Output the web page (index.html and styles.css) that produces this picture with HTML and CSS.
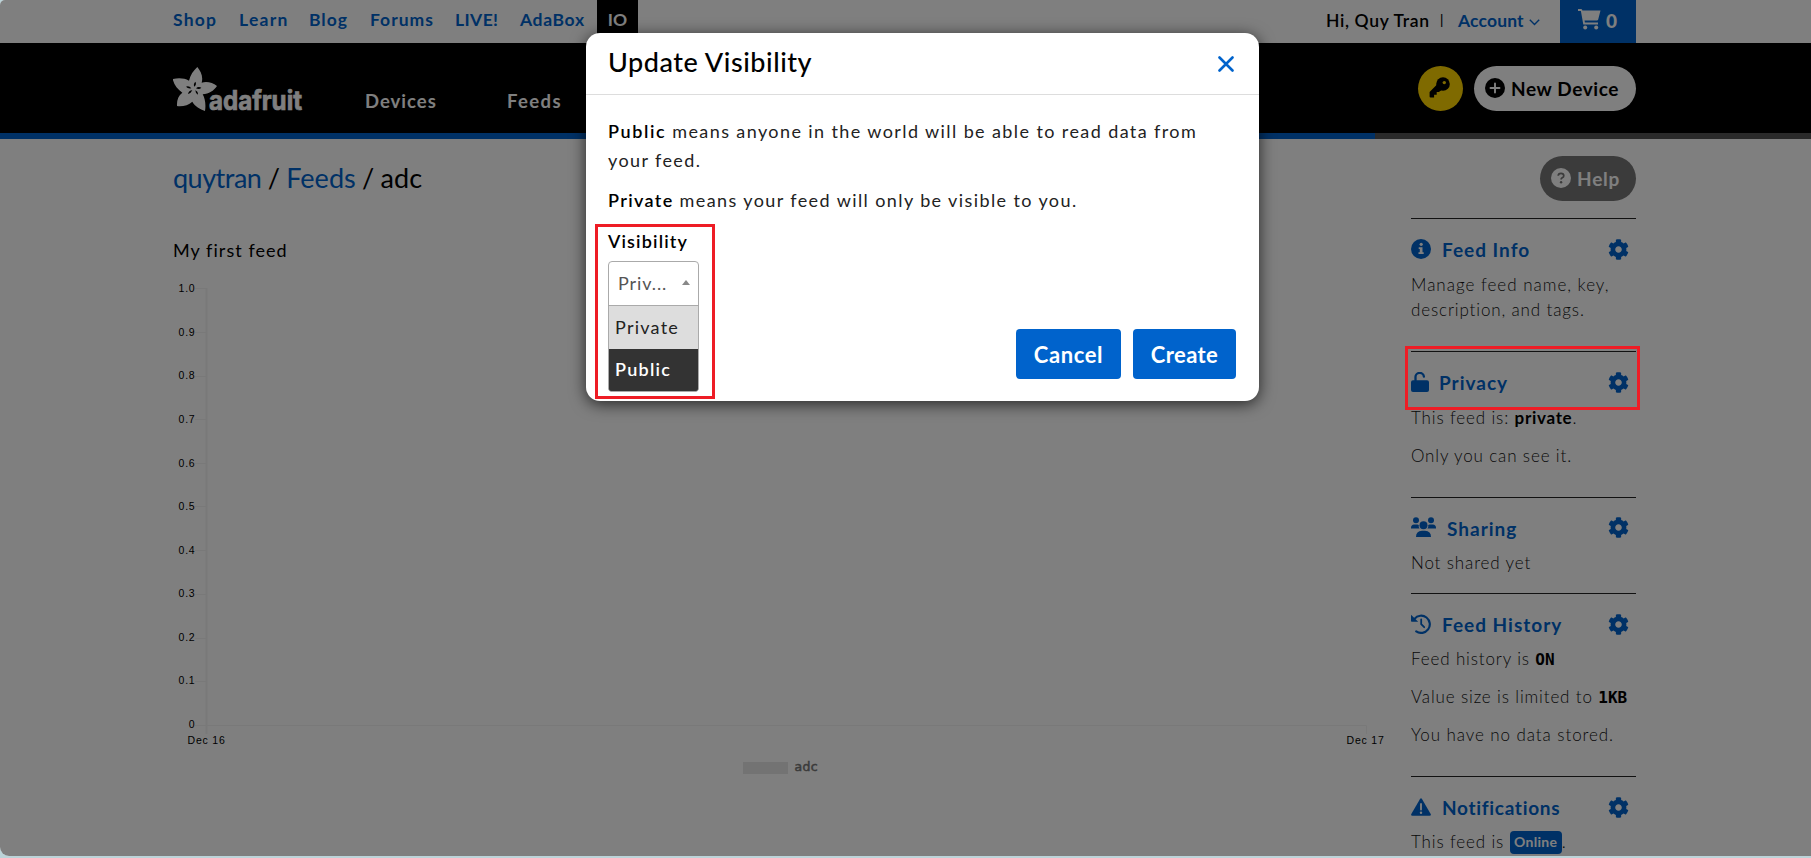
FILE: index.html
```html
<!DOCTYPE html>
<html lang="en">
<head>
<meta charset="utf-8">
<title>adc - Adafruit IO</title>
<link rel="stylesheet" href="styles.css">
</head>
<body>
<svg width="0" height="0" class="defs">
  <symbol id="cog" viewBox="0 0 512 512"><path d="M487.4 315.7l-42.6-24.6c4.3-23.2 4.3-47 0-70.2l42.6-24.6c4.9-2.8 7.1-8.6 5.5-14-11.1-35.6-30-67.8-54.7-94.6-3.8-4.1-10-5.1-14.8-2.3L380.8 110c-17.9-15.4-38.5-27.3-60.8-35.1V25.8c0-5.6-3.9-10.5-9.4-11.7-36.7-8.2-74.3-7.8-109.2 0-5.5 1.2-9.4 6.1-9.4 11.7V75c-22.2 7.9-42.8 19.8-60.8 35.1L88.7 85.5c-4.9-2.8-11-1.9-14.8 2.3-24.7 26.7-43.6 58.9-54.7 94.6-1.7 5.4.6 11.2 5.5 14L67.3 221c-4.3 23.2-4.3 47 0 70.2l-42.6 24.6c-4.9 2.8-7.1 8.6-5.5 14 11.1 35.6 30 67.8 54.7 94.6 3.8 4.1 10 5.1 14.8 2.3l42.6-24.6c17.9 15.4 38.5 27.3 60.8 35.1v49.2c0 5.6 3.9 10.5 9.4 11.7 36.7 8.2 74.3 7.8 109.2 0 5.5-1.2 9.4-6.1 9.4-11.7v-49.2c22.2-7.9 42.8-19.8 60.8-35.1l42.6 24.6c4.9 2.8 11 1.9 14.8-2.3 24.7-26.7 43.6-58.9 54.7-94.6 1.5-5.5-.7-11.3-5.6-14.1zM256 336c-44.1 0-80-35.900-80-80s35.900-80 80-80 80 35.900 80 80-35.900 80-80 80z"/></symbol>
</svg>
<div class="page">
  <div class="topbar">
    <nav class="sites">
      <a>Shop</a><a>Learn</a><a>Blog</a><a>Forums</a><a>LIVE!</a><a>AdaBox</a><a class="active">IO</a>
    </nav>
    <div class="account">
      <span class="hi">Hi, Quy Tran</span><span class="bar">|</span><a class="acct">Account</a>
      <svg class="chev" width="11" height="7" viewBox="0 0 11 7"><path d="M.8.8l4.700 4.700L10.200.8" fill="none" stroke="currentColor" stroke-width="1.400"/></svg>
      <div class="cart">
        <svg width="23" height="21" viewBox="0 0 23 21"><path d="M0 0h3.200q1 0 1.200 1.500H22.500L20.200 10.500q-.3 1-1.300 1H6.500l.4 2H20v2H5.300L2.900 2H0z" fill="currentColor"/><circle cx="7.200" cy="18.500" r="2" fill="currentColor"/><circle cx="18.200" cy="18.500" r="2" fill="currentColor"/></svg>
        <b>0</b>
      </div>
    </div>
  </div>
  <header class="masthead">
    <svg class="logo" width="136" height="50" viewBox="0 0 136 50">
      <g transform="translate(-8 -7) scale(.3333)">
        <path fill="#fff" d="M97 21C108 34 115 50 110 68C126 63 143 68 156 78C146 93 132 101 113 103C121 117 123 136 120 153C105 147 90 140 82 125C70 136 53 140 36 138C35 121 40 107 52 98C37 88 27 75 23 57C41 53 58 54 72 62C76 45 85 32 97 21z"/>
        <g fill="#000"><path d="M88 80Q84 72 91 65Q96 72 88 80zM93 85Q100 78 109 83Q103 90 93 85zM91 91Q99 94 99 104Q91 100 91 91zM82 91Q78 100 69 102Q71 92 82 91zM79 85Q69 87 63 80Q72 76 79 85z"/></g>
      </g>
      <text x="36" y="43" textLength="93" lengthAdjust="spacingAndGlyphs" class="wordmark">adafruit</text>
    </svg>
    <a class="devices">Devices</a>
    <a class="feeds">Feeds</a>
    <div class="actions">
      <div class="key"><svg width="21" height="21" viewBox="0 0 21 21"><circle cx="14" cy="7" r="6.800"/><path d="M8 7.500L.6 15v4.500q0 .9.900.9h3.600v-2.600h2.600v-2.700h2.200L14 12z"/><circle cx="15.300" cy="5.600" r="1.700" fill="#ffd400"/></svg></div>
      <div class="pill new"><svg width="20" height="20" viewBox="0 0 20 20"><circle cx="10" cy="10" r="10"/><path d="M10 5.500v9M5.500 10h9" stroke="#fff" stroke-width="1.900" stroke-linecap="round"/></svg><span>New Device</span></div>
    </div>
  </header>
  <div class="stripe"></div>
  <main class="content">
    <section class="feed">
      <h1><a>quytran</a> / <a>Feeds</a> / adc</h1>
      <p class="desc">My first feed</p>
      <svg class="chart" width="1215" height="515" viewBox="173 275 1215 515">
        <g stroke="#f3f3f3" fill="none">
          <path d="M195 288.500h12M195 332.500h12M195 376.500h12M195 419.500h12M195 463.500h12M195 506.500h12M195 550.500h12M195 594.500h12M195 638.500h12M195 681.500h12M195 725.500H1366.500V734"/>
          <path d="M206.500 288V734" stroke-width="2"/>
        </g>
        <g class="tick" text-anchor="end">
          <text x="195.500" y="292">1.0</text><text x="195.500" y="335.500">0.9</text><text x="195.500" y="379">0.8</text><text x="195.500" y="422.500">0.7</text><text x="195.500" y="466.500">0.6</text><text x="195.500" y="509.500">0.5</text><text x="195.500" y="553.500">0.4</text><text x="195.500" y="597">0.3</text><text x="195.500" y="641">0.2</text><text x="195.500" y="684">0.1</text><text x="195.500" y="728">0</text>
        </g>
        <g class="tick"><text x="187.500" y="744">Dec 16</text><text x="1346.500" y="744">Dec 17</text></g>
        <rect x="743" y="762" width="45" height="12" fill="#e6e6e6"/>
        <text class="legend" x="794.500" y="771">adc</text>
      </svg>
    </section>
    <aside class="side">
      <div class="pill help"><svg width="20" height="20" viewBox="0 0 20 20"><circle cx="10" cy="10" r="10" fill="#fff"/><path d="M7.200 7.800Q7.300 5.300 10 5.300T12.800 7.700Q12.800 9 11.200 9.800Q10.100 10.400 10.100 11.600" fill="none" stroke="#777" stroke-width="1.700"/><circle cx="10.100" cy="14.200" r="1.200" fill="#777"/></svg><span>Help</span></div>
      <section class="s1">
        <h2><svg width="20" height="20" viewBox="0 0 20 20"><circle cx="10" cy="10" r="10"/><g fill="#fff"><circle cx="10.200" cy="5.300" r="1.600"/><path d="M7.700 8.200h3.800v5h1.200v1.900H7.500v-1.900h1.300V10H7.700z"/></g></svg><span>Feed Info</span><svg class="cog"><use href="#cog"/></svg></h2>
        <p>Manage feed name, key,<br><span class="tight">description, and tags.</span></p>
      </section>
      <section class="s2">
        <h2><svg width="18" height="20" viewBox="0 0 18 20"><path d="M4.500 10V5.500a4.200 4.200 0 0 1 8.400-.8" fill="none" stroke="currentColor" stroke-width="2.300" stroke-linecap="round"/><rect y="8.200" width="18" height="11.800" rx="2"/></svg><span class="priv">Privacy</span><svg class="cog"><use href="#cog"/></svg></h2>
        <p class="tight">This feed is: <b>private</b>.</p>
        <p class="tight">Only you can see it.</p>
      </section>
      <section class="s3">
        <h2><svg width="25" height="20" viewBox="0 0 25 20"><circle cx="5" cy="3.200" r="3"/><circle cx="20" cy="3.200" r="3"/><circle cx="12.500" cy="8.300" r="4"/><path d="M3 7.600h3.500q.8 0 1.300.3Q7.300 10 8.600 11.600H0V10.800Q.2 7.800 3 7.600zM22 7.600h-3.500q-.8 0-1.300.3Q17.700 10 16.400 11.600H25V10.800Q24.800 7.800 22 7.600zM5 20q0-6 6-6.200h3q6 .2 6 6.200z"/></svg><span>Sharing</span><svg class="cog"><use href="#cog"/></svg></h2>
        <p class="tight">Not shared yet</p>
      </section>
      <section class="s4">
        <h2><svg width="20" height="20" viewBox="0 0 20 20"><path d="M3.500 4.900A8.600 8.600 0 1 1 5.200 17.300" fill="none" stroke="currentColor" stroke-width="2.200" stroke-linecap="round"/><path d="M0 .8L7.200 7.800H.8Q0 7.800 0 7z"/><path d="M10.200 5.500v4.700l3 3" fill="none" stroke="currentColor" stroke-width="1.800" stroke-linecap="round"/></svg><span>Feed History</span><svg class="cog"><use href="#cog"/></svg></h2>
        <p class="tight">Feed history is <code>ON</code></p>
        <p class="tight">Value size is limited to <code>1KB</code></p>
        <p class="stored">You have no data stored.</p>
      </section>
      <section class="s5">
        <h2><svg width="20" height="20" viewBox="0 0 20 20"><path d="M8.900 2.200q1.100-1.700 2.200 0l8.600 14.700q.8 1.700-1.100 1.900H1.400Q-.5 18.600.3 16.900z"/><path d="M10 7v5.500" stroke="#fff" stroke-width="1.900" stroke-linecap="round"/><circle cx="10" cy="15.700" r="1.200" fill="#fff"/></svg><span class="notif">Notifications</span><svg class="cog"><use href="#cog"/></svg></h2>
        <p class="tight">This feed is <span class="badge">Online</span>.</p>
      </section>
    </aside>
  </main>
  <div class="backdrop"></div>
</div>
<div class="modal">
  <div class="modal-head"><h3>Update Visibility</h3><svg width="16" height="16" viewBox="0 0 16 16"><path d="M1.500 1.500l13 13M14.500 1.500l-13 13" stroke="#0063cc" stroke-width="2.600" stroke-linecap="round"/></svg></div>
  <div class="modal-body">
    <p><b class="pub">Public</b> means anyone in the world will be able to read data from<br>your feed.</p>
    <p><b>Private</b> means your feed will only be visible to you.</p>
    <label>Visibility</label>
    <div class="select"><span>Priv...</span><svg width="8" height="5" viewBox="0 0 8 5"><path d="M0 5l4-5 4 5z" fill="#888"/></svg>
      <ul><li>Private</li><li class="hot">Public</li></ul>
    </div>
  </div>
  <div class="buttons"><button class="cancel">Cancel</button><button class="create">Create</button></div>
</div>
<div class="mark mark-select"></div>
<div class="mark mark-privacy"></div>
</body>
</html>
```

FILE: styles.css
```css
* { box-sizing: border-box; margin: 0; padding: 0; }
body { width: 1811px; height: 858px; overflow: hidden; position: relative; background: #bcd4d9; font-family: Lato, "Open Sans", sans-serif; color: #000; }
.defs { position: absolute; }
.page { position: relative; height: 856px; overflow: hidden; background: #fff; border-radius: 5px 0 0 9px; }
.backdrop { position: absolute; inset: 0; background: rgba(0, 0, 0, .5); }
a { color: #0063cc; }

.topbar { height: 43px; padding: 0 175px 0 173px; display: flex; justify-content: space-between; font-size: 17.5px; font-weight: 700; line-height: 40px; letter-spacing: 1px; }
.sites { display: flex; }
.sites a:nth-child(1) { width: 66px; letter-spacing: 1.2px; }
.sites a:nth-child(2) { width: 70px; letter-spacing: 1.3px; }
.sites a:nth-child(3) { width: 61px; }
.sites a:nth-child(4) { width: 85px; }
.sites a:nth-child(5) { width: 65px; letter-spacing: .4px; }
.sites a:nth-child(6) { width: 77px; letter-spacing: .65px; }
.sites .active { width: 41px; background: #000; color: #fff; text-align: center; letter-spacing: 0; height: 43px; }
.account { display: flex; line-height: 41px; }
.hi { width: 114px; margin-left: -1px; font-weight: 600; letter-spacing: .65px; }
.bar { width: 18px; font-size: 13px; font-weight: 600; line-height: 41px; }
.acct { width: 71px; letter-spacing: .15px; }
.chev { margin: 19px 20px 0 0; color: #0063cc; }
.cart { width: 76px; height: 43px; background: #0063cc; color: #fff; display: flex; padding-left: 18px; line-height: 41px; font-size: 19px; }
.cart svg { margin: 9px 5px 0 0; }

.masthead { height: 90px; background: #000; padding: 0 175px 0 173px; display: flex; }
.masthead a { color: #fff; font-size: 18.5px; font-weight: 700; line-height: 30px; margin-top: 43px; letter-spacing: 1px; }
.masthead .feeds { letter-spacing: 1.4px; }
.logo { margin-top: 24px; }
.wordmark { font: 700 27px Inter, sans-serif; fill: #fff; stroke: #fff; stroke-width: .7px; }
.devices { margin-left: 56px; width: 142px; }
.actions { margin: 23px 0 0 auto; display: flex; gap: 11px; }
.key { width: 45px; height: 45px; border-radius: 50%; background: #ffd400; padding: 11px; }
.key svg { display: block; }
.pill { height: 45px; border-radius: 23px; display: flex; align-items: center; padding: 0 0 2px 11px; font-size: 19px; font-weight: 700; }
.pill span { margin: 1px 0 0 6px; }
.new { width: 162px; background: #fff; letter-spacing: .6px; }
.stripe { height: 6px; background: linear-gradient(to right, #0063cc 1375px, #555 1375px); }

.content { display: flex; padding: 0 175px 0 173px; }
.feed { width: 1238px; }
h1 { font-size: 27px; font-weight: 400; line-height: 34px; margin-top: 22px; letter-spacing: .05px; word-spacing: -.7px; }
h1 a:first-child { letter-spacing: -.5px; }
.desc { font-size: 18px; line-height: 24px; margin-top: 43px; letter-spacing: 1.05px; }
.chart { display: block; margin-top: 13px; }
.tick { font: 10.5px "Liberation Sans", Arial, sans-serif; letter-spacing: .8px; }
.legend { font: 12.5px "DejaVu Sans", sans-serif; fill: #777; stroke: #777; stroke-width: .5px; letter-spacing: .3px; }

.side { width: 225px; flex: none; }
.help { width: 96px; margin: 17px 0 17px auto; background: #777; color: #fff; letter-spacing: .8px; }
.side section { border-top: 1px solid #222; padding-top: 16px; }
.s1 { height: 133px; }
.s2 { height: 146px; }
.s3 { height: 96px; }
.s4 { height: 183px; }
h2 { display: flex; height: 30px; margin-bottom: 7px; color: #0063cc; font-size: 19px; line-height: 30px; letter-spacing: 1px; fill: currentColor; }
h2 > svg { margin-top: 4px; }
h2 span { margin-left: 11px; }
h2 .priv { margin-left: 10px; }
.notif { letter-spacing: .7px; }
h2 .cog { width: 21px; height: 21px; margin: 4px 7px 0 auto; }
.s3 .cog, .s3 h2 > svg { margin-top: 3px; }
h2 g { fill: #fff; }
.side p { font-size: 17px; font-weight: 300; line-height: 25px; letter-spacing: 1px; margin-bottom: 13px; white-space: nowrap; color: #111; }
.s3 p, .s4 p, .s5 p { position: relative; top: -1px; }
.side p b { font-weight: 700; letter-spacing: .7px; color: #000; }
.side .tight { letter-spacing: .86px; }
.side .stored { letter-spacing: .92px; }
.side code { font: 700 16px/20px "DejaVu Sans Mono", monospace; letter-spacing: 0; color: #000; }
.badge { display: inline-block; width: 52px; height: 23px; border-radius: 4px; background: #0063cc; color: #fff; font-size: 14px; font-weight: 700; line-height: 22px; letter-spacing: .3px; text-align: center; vertical-align: middle; margin: -4px 0 -1px; }

.modal { position: absolute; left: 586px; top: 33px; width: 673px; height: 368px; background: #fff; border-radius: 14px; box-shadow: 0 3px 16px rgba(0, 0, 0, .7); }
.modal-head { height: 62px; border-bottom: 1px solid #ddd; padding: 0 25px 4px 22px; display: flex; justify-content: space-between; align-items: center; }
.modal-head svg { margin-top: 5px; }
h3 { font-size: 27px; font-weight: 500; line-height: 57px; letter-spacing: .55px; }
.modal-body { padding: 22px 22px 0; }
.modal-body p { font-size: 18px; line-height: 29px; letter-spacing: 1.4px; margin-bottom: 11px; color: #222; white-space: nowrap; }
.modal-body b { font-weight: 600; letter-spacing: 1.35px; color: #000; }
.modal-body .pub { letter-spacing: 1.6px; }
label { display: block; font-size: 18px; font-weight: 600; line-height: 24px; margin-top: 14px; letter-spacing: 1.15px; }
.select { position: relative; width: 91px; height: 45px; margin-top: 8px; border: 1px solid #aaa; border-radius: 4px 4px 0 0; padding: 0 8px 2px 9px; display: flex; justify-content: space-between; align-items: center; font-size: 18px; letter-spacing: .9px; color: #555; }
.select ul { position: absolute; left: -1px; top: 43px; width: 91px; border: 1px solid #aaa; border-radius: 0 0 4px 4px; list-style: none; overflow: hidden; background: #333; letter-spacing: 1.25px; }
li { height: 43px; line-height: 43px; padding-left: 6px; background: #ddd; color: #222; }
li.hot { height: 42px; line-height: 41px; background: #333; color: #fff; font-weight: 600; }
.buttons { position: absolute; right: 23px; bottom: 22px; display: flex; gap: 12px; }
button { height: 50px; border: 0; border-radius: 4px; background: #0063cc; color: #fff; font: 700 22px Lato, sans-serif; }
.cancel { width: 105px; letter-spacing: .6px; }
.create { width: 103px; letter-spacing: .4px; }

.mark { position: absolute; border: 3px solid #ee1c25; }
.mark-select { left: 595px; top: 224px; width: 120px; height: 175px; }
.mark-privacy { left: 1405px; top: 346px; width: 235px; height: 64px; }
```
